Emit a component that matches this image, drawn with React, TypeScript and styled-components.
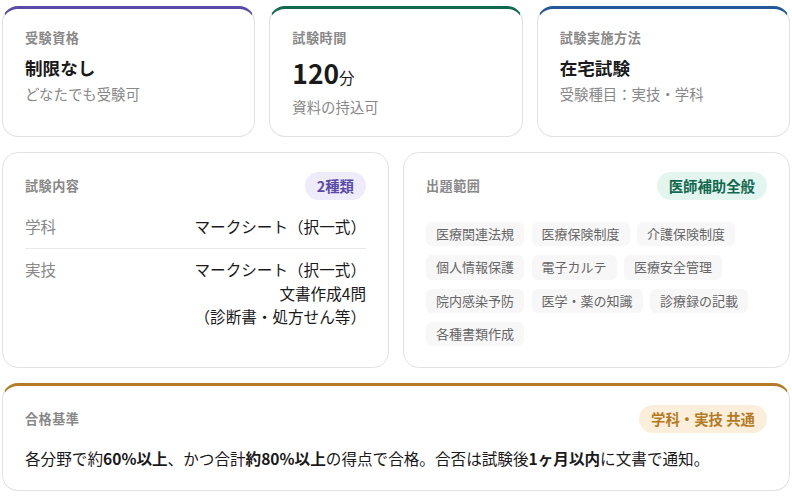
import React from 'react';
import styled, { createGlobalStyle } from 'styled-components';

const GlobalStyle = createGlobalStyle`
    html, body {
        margin: 0;
        padding: 0;
        background: #ffffff;
    }
    body {
        font-family: "Noto Sans CJK JP", "Noto Sans", sans-serif;
        color: #1a1a1a;
    }
`;

const Page = styled.div`
    width: 792px;
    height: 498px;
    box-sizing: border-box;
    padding: 6px 2px 0;
    display: flex;
    flex-direction: column;
    gap: 15px;
    overflow: hidden;
`;

const Row = styled.div<{ $columns: number }>`
    display: grid;
    grid-template-columns: repeat(${props => props.$columns}, 1fr);
    gap: 14px;
`;

const Card = styled.div<{ $accent?: string }>`
    box-sizing: border-box;
    background: #ffffff;
    border: 1px solid #e2e2e2;
    border-top: ${props => (props.$accent ? `3px solid ${props.$accent}` : '1px solid #e2e2e2')};
    border-radius: 16px;
`;

const StatCard = styled(Card)`
    height: 131px;
    padding: 20px 22px 0;
`;

const DetailCard = styled(Card)`
    height: 216px;
    padding: 19px 22px 0;
`;

const WideCard = styled(Card)`
    height: 108px;
    padding: 19px 22px 0;
`;

const Label = styled.div`
    font-size: 13.12px;
    font-weight: 700;
    line-height: 18px;
    color: #888888;
    letter-spacing: 0.5px;
`;

const Value = styled.div`
    margin-top: 9px;
    font-size: 17.6px;
    font-weight: 700;
    line-height: 24px;
    color: #1a1a1a;
`;

const BigNumber = styled.div`
    margin-top: 7px;
    font-size: 26.4px;
    font-weight: 700;
    line-height: 38px;
    color: #1a1a1a;
`;

const Unit = styled.span`
    font-size: 15.5px;
    font-weight: 400;
`;

const Sub = styled.div<{ $tight?: boolean }>`
    margin-top: ${props => (props.$tight ? '1px' : '4px')};
    font-size: 14.4px;
    line-height: 20px;
    color: #888888;
`;

const CardHeader = styled.div`
    display: flex;
    justify-content: space-between;
    align-items: center;
`;

const Badge = styled.span<{ $bg: string; $fg: string }>`
    padding: 0 12px;
    height: 28px;
    border-radius: 14px;
    font-size: 14.4px;
    font-weight: 700;
    line-height: 28px;
    background: ${props => props.$bg};
    color: ${props => props.$fg};
`;

const ExamList = styled.div`
    margin-top: 6px;
`;

const ExamRow = styled.div<{ $divided?: boolean }>`
    display: flex;
    justify-content: space-between;
    padding: 9px 0 10px;
    border-bottom: ${props => (props.$divided ? '1px solid #e8e8e8' : 'none')};
    font-size: 15.6px;
    line-height: 23.3px;
`;

const ExamName = styled.span`
    color: #888888;
`;

const ExamDetail = styled.span`
    text-align: right;
    color: #1a1a1a;
`;

const TagList = styled.div`
    display: flex;
    flex-wrap: wrap;
    gap: 9px 7.5px;
    margin-top: 22px;
`;

const Tag = styled.span`
    padding: 0 10px;
    height: 24.3px;
    border-radius: 6px;
    background: #f7f7f7;
    color: #666666;
    font-size: 13px;
    line-height: 24.3px;
`;

const Criteria = styled.p`
    margin: 13px 0 0;
    font-size: 15.6px;
    line-height: 24px;
    color: #1a1a1a;
`;

const tags = [
    '医療関連法規', '医療保険制度', '介護保険制度',
    '個人情報保護', '電子カルテ', '医療安全管理',
    '院内感染予防', '医学・薬の知識', '診療録の記載',
    '各種書類作成',
];

export default function App() {
    return (
        <Page>
            <GlobalStyle />
            <Row $columns={3}>
                <StatCard $accent="#5b4ba8">
                    <Label>受験資格</Label>
                    <Value>制限なし</Value>
                    <Sub>どなたでも受験可</Sub>
                </StatCard>
                <StatCard $accent="#12694f">
                    <Label>試験時間</Label>
                    <BigNumber>120<Unit>分</Unit></BigNumber>
                    <Sub $tight>資料の持込可</Sub>
                </StatCard>
                <StatCard $accent="#23599b">
                    <Label>試験実施方法</Label>
                    <Value>在宅試験</Value>
                    <Sub>受験種目：実技・学科</Sub>
                </StatCard>
            </Row>
            <Row $columns={2}>
                <DetailCard>
                    <CardHeader>
                        <Label>試験内容</Label>
                        <Badge $bg="#eeebfb" $fg="#5b4ba8">2種類</Badge>
                    </CardHeader>
                    <ExamList>
                        <ExamRow $divided>
                            <ExamName>学科</ExamName>
                            <ExamDetail>マークシート（択一式）</ExamDetail>
                        </ExamRow>
                        <ExamRow>
                            <ExamName>実技</ExamName>
                            <ExamDetail>
                                マークシート（択一式）<br />
                                文書作成4問<br />
                                （診断書・処方せん等）
                            </ExamDetail>
                        </ExamRow>
                    </ExamList>
                </DetailCard>
                <DetailCard>
                    <CardHeader>
                        <Label>出題範囲</Label>
                        <Badge $bg="#e2f5ee" $fg="#12694f">医師補助全般</Badge>
                    </CardHeader>
                    <TagList>
                        {tags.map(tag => <Tag key={tag}>{tag}</Tag>)}
                    </TagList>
                </DetailCard>
            </Row>
            <WideCard $accent="#b57a24">
                <CardHeader>
                    <Label>合格基準</Label>
                    <Badge $bg="#fbefdc" $fg="#b57a24">学科・実技 共通</Badge>
                </CardHeader>
                <Criteria>
                    各分野で約<b>60%以上</b>、かつ合計<b>約80%以上</b>の得点で合格。合否は試験後<b>1ヶ月以内</b>に文書で通知。
                </Criteria>
            </WideCard>
        </Page>
    );
}
